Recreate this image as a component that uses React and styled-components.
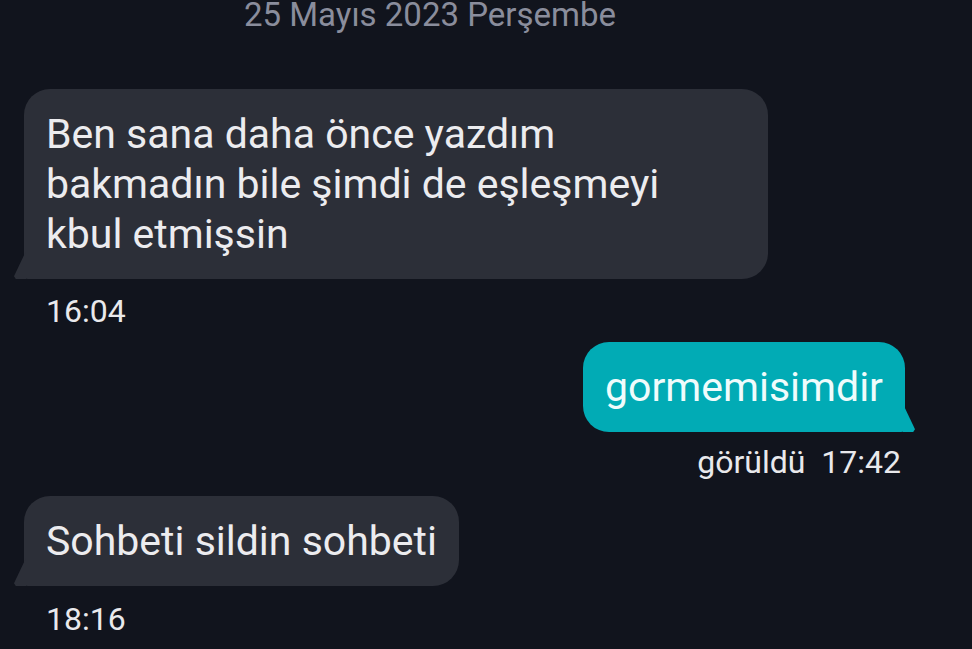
import React from 'react';
import styled, { createGlobalStyle } from 'styled-components';

const Global = createGlobalStyle`
   html, body {
      margin: 0;
      padding: 0;
      background: #11141d;
      height: 100%;
      overflow: hidden;
   }
   body {
      font-family: Roboto, "Noto Sans", sans-serif;
   }
`;

const Screen = styled.main`
   display: flex;
   flex-direction: column;
   width: 972px;
   height: 649px;
   overflow: hidden;
   background: #11141d;
`;

const DateLabel = styled.div`
   margin-top: -5px;
   padding-right: 112px;
   text-align: center;
   font-size: 33px;
   line-height: 39px;
   color: #8a8d9c;
`;

const Row = styled.div`
   display: flex;
   flex-direction: column;
   align-items: ${(p) => (p.$mine ? 'flex-end' : 'flex-start')};
   padding: ${(p) => (p.$mine ? '0 67px 0 0' : '0 0 0 24px')};
   margin-top: ${(p) => p.$gap || 0}px;
`;

const Bubble = styled.div`
   position: relative;
   box-sizing: border-box;
   width: ${(p) => p.$width || 'auto'};
   padding: 20px 22px;
   font-size: 41px;
   line-height: 50px;
   border-radius: ${(p) => (p.$mine ? '26px 26px 4px 26px' : '26px 26px 26px 4px')};
   background: ${(p) => (p.$mine ? '#01abb5' : '#2c2f38')};
   color: ${(p) => (p.$mine ? '#effcfc' : '#ececef')};

   &::before {
      content: '';
      position: absolute;
      bottom: 0;
      width: 12px;
      height: 28px;
      background: inherit;
      ${(p) =>
         p.$mine
            ? `right: -10px; clip-path: polygon(0 0, 100% 90%, 85% 100%, 0 100%);`
            : `left: -10px; clip-path: polygon(100% 0, 0 90%, 15% 100%, 100% 100%);`}
   }
`;

const Meta = styled.div`
   margin-top: ${(p) => p.$gap}px;
   padding: ${(p) => (p.$mine ? '0 4px 0 0' : '0 0 0 22px')};
   font-size: 32px;
   line-height: 38px;
   color: #e9e9ec;
   white-space: pre;
`;

export default function App() {
   return (
      <Screen>
         <Global />
         <DateLabel>25 Mayıs 2023 Perşembe</DateLabel>

         <Row $gap={55}>
            <Bubble $width="744px">
               Ben sana daha önce yazdım
               <br />
               bakmadın bile şimdi de eşleşmeyi
               <br />
               kbul etmişsin
            </Bubble>
            <Meta $gap={13}>16:04</Meta>
         </Row>

         <Row $mine $gap={12}>
            <Bubble $mine>gormemisimdir</Bubble>
            <Meta $mine $gap={11}>görüldü  17:42</Meta>
         </Row>

         <Row $gap={15}>
            <Bubble>Sohbeti sildin sohbeti</Bubble>
            <Meta $gap={14}>18:16</Meta>
         </Row>
      </Screen>
   );
}
